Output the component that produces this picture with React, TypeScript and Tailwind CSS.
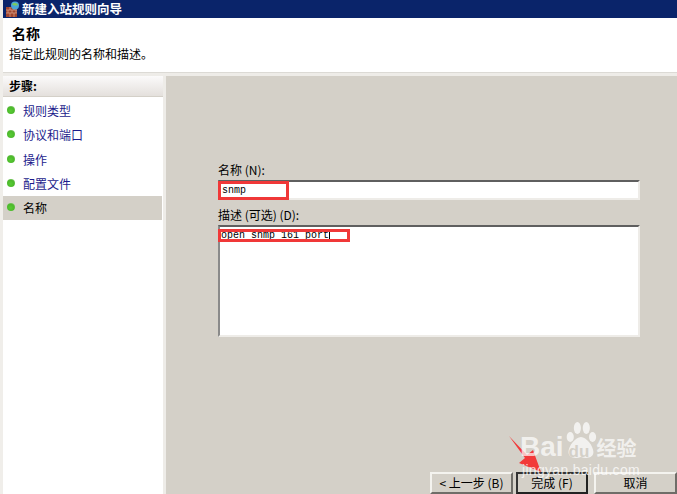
import React from 'react';

const cjk = { fontFamily: '"Noto Sans CJK SC", "Liberation Sans", sans-serif' };

const steps = ['规则类型', '协议和端口', '操作', '配置文件', '名称'];

const Bullet = () => (
  <span className="w-[8px] h-[8px] -mt-[2px] rounded-full shrink-0 bg-[radial-gradient(circle_at_45%_60%,#58cc34_0%,#4cb82c_55%,#c4dcb8_100%)]" />
);

const Sunken = ({ className, children }: { className: string; children?: React.ReactNode }) => (
  <div className={`bg-white border-t-2 border-l-2 border-t-[#5f5f5f] border-l-[#8a8a8a] border-r-2 border-b-2 border-r-[#eeece8] border-b-[#eeece8] ${className}`}>
    {children}
  </div>
);

const Btn = ({ w, strong, children }: { w: string; strong?: boolean; children: React.ReactNode }) => (
  <button
    className={`${w} h-[22px] flex items-center justify-center text-[12px] text-black bg-[#d4d0c8] ${
      strong
        ? 'border-2 border-t-[#333] border-l-[#333] border-r-[#222] border-b-[#222]'
        : 'border-2 border-t-[#f4f3ef] border-l-[#f4f3ef] border-r-[#6f6d68] border-b-[#6f6d68]'
    }`}
  >
    {children}
  </button>
);

export default function App() {
  return (
    <div style={cjk} className="relative w-[677px] h-[494px] overflow-hidden bg-[#f0eeea] flex flex-col text-black">
      <div className="h-[18px] ml-[3px] bg-[#0a246a] flex items-center pl-[3px] gap-[1px] shrink-0">
        <svg width="15" height="16" viewBox="0 0 15 16">
          <rect x="0" y="6" width="11" height="10" fill="#a0452e" />
          <path d="M0 9h11M0 12h11M4 6v3M8 6v3M2 9v3M6 9v3M10 9v3M4 12v4M8 12v4" stroke="#d9a48c" strokeWidth="0.7" />
          <circle cx="9" cy="4.500" r="4" fill="#4aa6d8" />
          <path d="M6 3.500c1-2 4-2 6 0-1 1.500-4 1.500-6 0z" fill="#7ccb5a" />
        </svg>
        <span className="text-white text-[12.500px] font-bold leading-none">新建入站规则向导</span>
      </div>

      <div className="h-[54px] ml-[3px] bg-white shrink-0 flex flex-col pt-[5px]">
        <div className="pl-[9px] text-[14px] font-bold leading-[20px]">名称</div>
        <div className="pl-[6px] text-[12px] leading-[16px] mt-[3px]">指定此规则的名称和描述。</div>
      </div>
      <div className="h-[4px] ml-[3px] bg-[#eeece8] border-t border-[#dcdad5] shrink-0" />

      <div className="flex-1 flex min-h-0">
        <div className="w-[163px] ml-[3px] shrink-0 bg-white border-r-[3px] border-[#eeece8] flex flex-col">
          <div className="h-[21px] bg-[linear-gradient(#fbfafa,#e4e0dc)] border-b border-[#d4d0c8] flex items-center pl-[6px] text-[12px] font-bold shrink-0">
            步骤:
          </div>
          <div className="flex flex-col pt-[2px] pr-[1px]">
            {steps.map((s, i) => {
              const on = i === steps.length - 1;
              return (
                <div
                  key={s}
                  className={`h-[24.250px] flex items-center gap-[8px] pl-[4px] text-[12px] ${
                    on ? 'bg-[#d4d0c8] text-black' : 'text-[#1c1c8c]'
                  }`}
                >
                  <Bullet />
                  <span>{s}</span>
                </div>
              );
            })}
          </div>
        </div>

        <div className="flex-1 flex flex-col min-w-0 bg-[#d4d0c8]">
          <div className="flex-1 pl-[52px] pt-[87px] pr-[37px] flex flex-col min-h-0">
            <div className="text-[12px] leading-[14px] h-[17px]">名称 (N):</div>
            <Sunken className="h-[20px] flex items-center pl-[2px] pt-[1px]">
              <span style={{ fontFamily: '"Liberation Mono", monospace' }} className="text-[10px] leading-none">snmp</span>
            </Sunken>
            <div className="text-[12px] leading-[14px] mt-[8px] h-[17px]">描述 (可选) (D):</div>
            <Sunken className="h-[112px] pl-[1px] pt-[2px]">
              <div className="flex items-center">
                <span style={{ fontFamily: '"Liberation Mono", monospace' }} className="text-[10px] leading-[10px]">open snmp 161 port</span>
                <span className="w-px h-[13px] bg-black" />
              </div>
            </Sunken>
          </div>
          <div className="h-[22px] flex justify-end shrink-0">
            <Btn w="w-[83px]">&lt; 上一步 (B)</Btn>
            <span className="w-[3px]" />
            <Btn w="w-[72px]" strong>完成 (F)</Btn>
            <span className="w-[6px]" />
            <Btn w="w-[83px]">取消</Btn>
          </div>
        </div>
      </div>

      {/* annotation boxes */}
      <div className="absolute left-[218px] top-[181px] w-[71px] h-[19px] border-[3px] border-[#f03838]" />
      <div className="absolute left-[218px] top-[229px] w-[132px] h-[13px] border-[3px] border-[#f03838]" />

      {/* arrow */}
      <svg className="absolute left-[505px] top-[432px]" width="40" height="42" viewBox="0 0 40 42">
        <path d="M4 4 L22 23 L28 18 L36 40 L14 31 L20 26 Z" fill="#f23a3a" />
      </svg>

      {/* watermark */}
      <div className="absolute left-[520px] top-[422px] h-[37px] flex items-end text-white/70 pointer-events-none">
        <span style={{ fontFamily: '"Liberation Sans", sans-serif' }} className="text-[28px] font-bold leading-[24px]">Bai</span>
        <span className="relative w-[33px] h-[37px]">
          <svg className="absolute inset-0" width="33" height="37" viewBox="0 0 37 37" preserveAspectRatio="none">
            <ellipse cx="7" cy="15" rx="4" ry="5" fill="currentColor" />
            <ellipse cx="15" cy="6" rx="4" ry="6" fill="currentColor" />
            <ellipse cx="25" cy="6" rx="4" ry="6" fill="currentColor" />
            <ellipse cx="32" cy="15" rx="4" ry="5" fill="currentColor" />
            <path d="M19 15c-6 0-14 9-14 15 0 6 8 7 14 5 6 2 14 1 14-5 0-6-8-15-14-15z" fill="currentColor" />
          </svg>
          <span style={{ fontFamily: '"Liberation Sans", sans-serif' }} className="absolute left-[5px] top-[21px] text-[17px] font-bold leading-none text-[#d4d0c8]">du</span>
        </span>
        <span className="text-[20px] font-bold leading-[22px]">经验</span>
      </div>
      <div style={{ fontFamily: '"Liberation Sans", sans-serif' }} className="absolute left-[522px] top-[463px] text-[14px] leading-none tracking-[0.3px] text-white/75 pointer-events-none">
        jingyan.baidu.com
      </div>
    </div>
  );
}
